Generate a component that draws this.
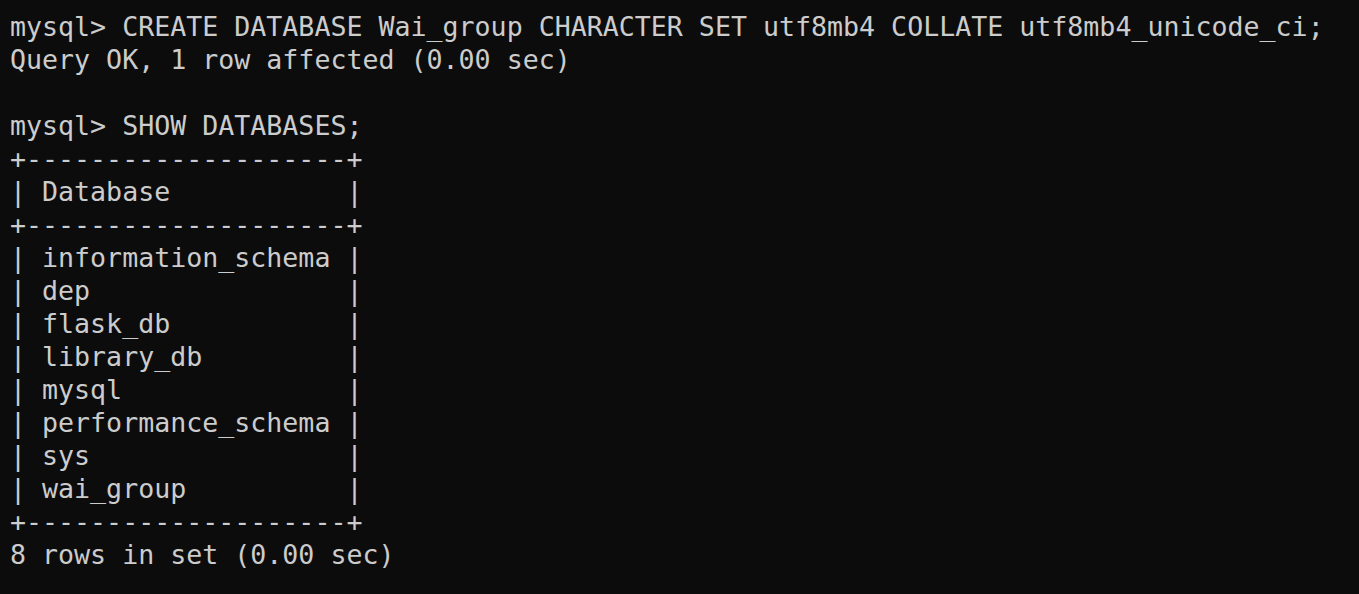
const LINES = [
  "mysql> CREATE DATABASE Wai_group CHARACTER SET utf8mb4 COLLATE utf8mb4_unicode_ci;",
  "Query OK, 1 row affected (0.00 sec)",
  "",
  "mysql> SHOW DATABASES;",
  "+--------------------+",
  "| Database           |",
  "+--------------------+",
  "| information_schema |",
  "| dep                |",
  "| flask_db           |",
  "| library_db         |",
  "| mysql              |",
  "| performance_schema |",
  "| sys                |",
  "| wai_group          |",
  "+--------------------+",
  "8 rows in set (0.00 sec)",
];

export default function App() {
  return (
    <div className="h-[594px] w-full overflow-hidden bg-[#0c0c0c] pl-[10px] pt-[10px] text-[#cccccc]">
      <pre className="font-['DejaVu_Sans_Mono','Liberation_Mono',monospace] text-[26.62px] leading-[33px]">
        {LINES.map((line, i) => (
          <div key={i} className="h-[33px] whitespace-pre">
            {line}
          </div>
        ))}
      </pre>
    </div>
  );
}
